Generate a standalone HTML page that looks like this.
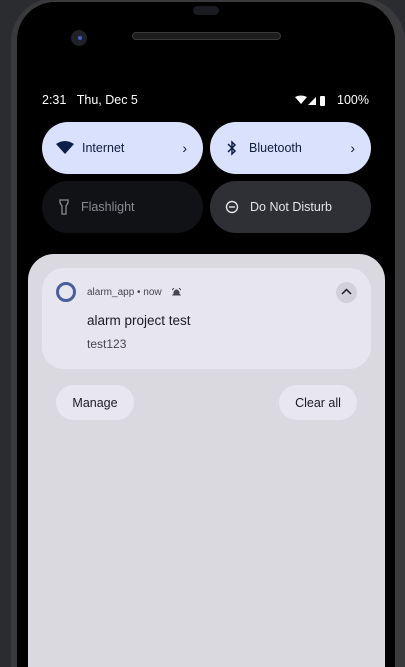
<!DOCTYPE html>
<html style="width:405px;height:667px;overflow:hidden"><head><style>
*{margin:0;padding:0;box-sizing:border-box}
body{width:405px;height:667px;overflow:hidden;background:#2a2c30;font-family:"Liberation Sans",sans-serif;position:relative}
.frame{position:absolute;left:11px;top:-2px;width:394px;height:669px;background:#3a3a3c;border-radius:44px 44px 0 0}
.screen{position:absolute;left:17px;top:2px;width:378px;height:665px;background:#000;border-radius:38px 38px 0 0}
.abs{position:absolute}
.tile{position:absolute;height:52px;border-radius:26px;font-size:12.5px;display:flex;align-items:center}
.panel{position:absolute;left:28px;top:254px;width:357px;height:413px;background:#dad9df;border-radius:26px 26px 0 0}
.card{position:absolute;left:42px;top:268px;width:329px;height:101px;background:#e7e6ef;border-radius:22px}
.btn{position:absolute;top:385px;height:35px;border-radius:18px;background:#e8e7ef;font-size:12.5px;color:#1c1b1f;display:flex;align-items:center;justify-content:center}
</style></head><body>
<div class="frame"></div>
<div class="screen"></div>
<div class="abs" style="left:193px;top:6px;width:26px;height:9px;border-radius:5px;background:#1a1c22"></div>
<div class="abs" style="left:132px;top:32px;width:149px;height:8px;border-radius:4px;background:#1d1d1d;border:1px solid #3a3a3a"></div>
<div class="abs" style="left:71px;top:30px;width:16px;height:16px;border-radius:50%;background:#1e2128"></div>
<div class="abs" style="left:78px;top:36px;width:4px;height:4px;border-radius:50%;background:#4a5cc0"></div>
<div class="abs" style="left:42px;top:93px;color:#fff;font-size:12.5px">2:31&nbsp;&nbsp;&nbsp;Thu, Dec 5</div>
<svg class="abs" style="left:295px;top:95px" width="40" height="12"><path d="M0 2 Q6 -1 12 2 L6 9Z" fill="#fff"/><path d="M13 10 L21 2 L21 10Z" fill="#fff"/><rect x="25" y="1" width="5" height="10" rx="1" fill="#fff"/></svg>
<div class="abs" style="left:337px;top:93px;color:#fff;font-size:12.5px">100%</div>
<div class="tile" style="left:42px;top:122px;width:161px;background:#d9e1fd;color:#0f1c3d"><svg style="margin-left:14px" width="18" height="14"><path d="M0 3 Q9 -3 18 3 L9 13Z" fill="#0d1e4a"/></svg><span style="margin-left:8px">Internet</span><span style="margin-left:auto;margin-right:16px;font-size:14px">›</span></div>
<div class="tile" style="left:210px;top:122px;width:161px;background:#d9e1fd;color:#0f1c3d"><svg style="margin-left:17px" width="10" height="16"><path d="M1 4 L8 11 L5 14 L5 2 L8 5 L1 12" stroke="#0d1e4a" stroke-width="1.5" fill="none"/></svg><span style="margin-left:12px">Bluetooth</span><span style="margin-left:auto;margin-right:16px;font-size:14px">›</span></div>
<div class="tile" style="left:42px;top:181px;width:161px;background:#101216;color:#8a8c92"><svg style="margin-left:17px" width="10" height="16"><path d="M1 1 H9 V4 L7 7 V15 H3 V7 L1 4Z" stroke="#8a8c92" stroke-width="1.3" fill="none"/></svg><span style="margin-left:12px">Flashlight</span></div>
<div class="tile" style="left:210px;top:181px;width:161px;background:#2e3035;color:#e4e4e8"><svg style="margin-left:15px" width="14" height="14"><circle cx="7" cy="7" r="5.5" stroke="#e4e4e8" stroke-width="1.4" fill="none"/><path d="M4 7 H10" stroke="#e4e4e8" stroke-width="1.4"/></svg><span style="margin-left:11px">Do Not Disturb</span></div>
<div class="panel"></div>
<div class="card"></div>
<div class="abs" style="left:56px;top:282px;width:20px;height:20px;border-radius:50%;border:3px solid #4a5d9c"></div>
<div class="abs" style="left:87px;top:287px;font-size:10px;color:#46464f">alarm_app • now</div>
<svg class="abs" style="left:172px;top:288px" width="9" height="9"><path d="M1 7 L2 6 V4 Q4.5 0 7 4 V6 L8 7Z M0 2 L2 0 M9 2 L7 0" stroke="#46464f" stroke-width="1" fill="#46464f"/></svg>
<div class="abs" style="left:336px;top:282px;width:21px;height:21px;border-radius:50%;background:#d2d1d9"></div>
<svg class="abs" style="left:341px;top:288px" width="11" height="8"><path d="M1 6 L5.5 1.5 L10 6" stroke="#1c1b1f" stroke-width="1.5" fill="none"/></svg>
<div class="abs" style="left:87px;top:313px;font-size:13.5px;color:#1c1b1f">alarm project test</div>
<div class="abs" style="left:87px;top:337px;font-size:12px;color:#46464f">test123</div>
<div class="btn" style="left:56px;width:78px">Manage</div>
<div class="btn" style="left:279px;width:78px">Clear all</div>
</body></html>
